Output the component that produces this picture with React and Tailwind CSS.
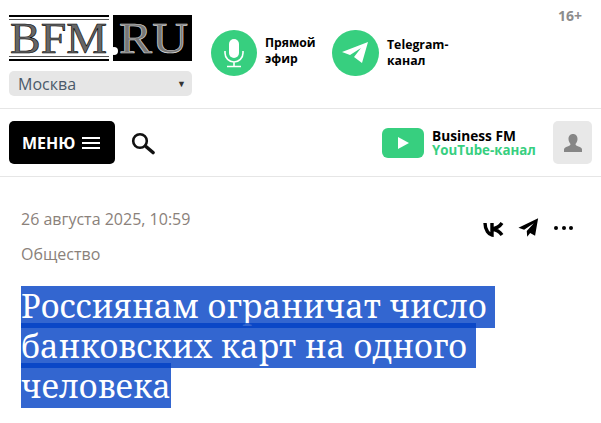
import React from "react";

const Plane = ({ className }) => (
  <svg viewBox="0 0 24 24" className={className} fill="currentColor">
    <path d="M23 1.500 0.500 12.200l6.500 2.400L18 7l-8 9 .5 6.500 3.400-4.300 5.600 3.300z" />
  </svg>
);

function Logo() {
  return (
    <svg width="183" height="46" viewBox="0 0 183 46" className="block overflow-visible">
      <rect x="0" y="0" width="100" height="2" fill="#000" />
      <rect x="0" y="4" width="100" height="1" fill="#555" />
      <rect x="0" y="41" width="100" height="1" fill="#555" />
      <rect x="0" y="44" width="100" height="2" fill="#000" />
      <rect x="104" y="0" width="79" height="46" fill="#000" />
      <text x="1" y="38" fontFamily="'Liberation Serif',serif" fontSize="45" textLength="97" lengthAdjust="spacingAndGlyphs" fill="#666" stroke="#000" strokeWidth="0.6">BFM</text>
      <circle cx="105" cy="36" r="4" fill="#fff" />
      <text x="110" y="38" fontFamily="'Liberation Serif',serif" fontSize="45" textLength="69" lengthAdjust="spacingAndGlyphs" fill="#777" stroke="#ddd" strokeWidth="0.6">RU</text>
    </svg>
  );
}

export default function App() {
  return (
    <div className="w-[601px] h-[423px] overflow-hidden bg-white font-['Open_Sans',sans-serif] text-black">
      <header className="h-[109px] border-b border-[#e6e6e6] flex pl-[9px] pr-[9px]">
        <div className="w-[183px] pt-[15px] shrink-0">
          <Logo />
          <div className="mt-[10px] h-[25px] rounded-[5px] bg-[#e6e6e6] flex items-center justify-between pl-[9px] pr-[6px]">
            <span className="text-[16px] text-[#4a5a6a]">Москва</span>
            <span className="text-[9px] text-[#333]">▼</span>
          </div>
        </div>
        <div className="ml-[19px] pt-[30px] flex items-start">
          <div className="w-[46px] h-[46px] rounded-full bg-[#37cf7f] flex items-center justify-center text-white shrink-0">
            <svg width="24" height="30" viewBox="0 0 24 30" fill="none" stroke="currentColor">
              <rect x="7" y="1" width="10" height="19" rx="5" fill="currentColor" stroke="none" />
              <path d="M3 13v2a9 9 0 0 0 18 0v-2M12 24v4M5 28.500h14" strokeWidth="1.600" />
            </svg>
          </div>
          <div className="ml-[8px] w-[67px] pt-[5px] text-[12.200px] leading-[16px] font-bold">Прямой<br />эфир</div>
          <div className="w-[47px] h-[46px] rounded-full bg-[#37cf7f] flex items-center justify-center text-white shrink-0">
            <svg width="28" height="24" viewBox="0 0 28 24" fill="currentColor" className="mr-[2px]">
              <path d="M27 1 1 11l8 3 11-7-7 9 8 6z" />
            </svg>
          </div>
          <div className="ml-[8px] pt-[7px] text-[12.300px] leading-[16px] font-bold">Telegram-<br />канал</div>
        </div>
        <div className="ml-auto pt-[5px] pr-[10px] text-[14px] font-bold text-[#8c8c8c]">16+</div>
      </header>

      <nav className="h-[68px] border-b border-[#e6e6e6] flex items-center pl-[9px] pr-[9px]">
        <div className="w-[106px] h-[43px] rounded-[5px] bg-black text-white flex items-center pl-[13px] gap-[7px]">
          <span className="text-[16px] font-bold">МЕНЮ</span>
          <span className="flex flex-col gap-[3px] w-[18px]">
            <span className="h-[2px] bg-white" />
            <span className="h-[2px] bg-white" />
            <span className="h-[2px] bg-white" />
          </span>
        </div>
        <svg width="24" height="24" viewBox="0 0 24 24" className="ml-[16px] mt-[2px]" fill="none" stroke="#111">
          <circle cx="9" cy="9" r="6.800" strokeWidth="2.600" />
          <path d="M15.500 15l6.500 5.500" strokeWidth="3.600" strokeLinecap="round" />
        </svg>
        <div className="ml-auto flex items-center">
          <div className="w-[42px] h-[30px] rounded-[6px] bg-[#37cf7f] flex items-center justify-center">
            <svg width="13" height="14" viewBox="0 0 13 14" fill="#fff"><path d="M1 1l11 6-11 6z" /></svg>
          </div>
          <div className="ml-[8px] w-[121px] text-[13.700px] leading-[14px] font-bold">
            Business FM
            <div className="text-[13.300px] text-[#37cf7f]">YouTube-канал</div>
          </div>
          <div className="w-[39px] h-[43px] rounded-[5px] bg-[#e8e8e8] flex items-center justify-center">
            <svg width="20" height="20" viewBox="0 0 20 20" fill="#868686">
              <path d="M10 1c3 0 4.500 2.300 4.500 5 0 2-1 3.800-2 5 .2 1.500 1 1.800 3 2.500 2 .7 3.500 1.500 3.500 3V19H1v-2.500c0-1.500 1.500-2.300 3.500-3 2-.7 2.800-1 3-2.500-1-1.200-2-3-2-5 0-2.700 1.500-5 4.500-5z" />
            </svg>
          </div>
        </div>
      </nav>

      <main className="pl-[21px] pr-[28px]">
        <div className="flex">
          <div>
            <div className="mt-[31px] text-[16px] leading-[22px] text-[#8a817a]">26 августа 2025, 10:59</div>
            <div className="mt-[14px] text-[16px] leading-[20px] text-[#8a817a]">Общество</div>
          </div>
          <div className="ml-auto mt-[40px] flex items-start gap-[14px] text-black">
            <svg width="21" height="24" viewBox="0 0 21 24" fill="none" stroke="currentColor" strokeWidth="3.400">
              <path d="M2 6c0 7 4 11.500 7 12V6M19 6c-2 3-5 5.300-10 6 5 .7 8 3 10 6" />
            </svg>
            <Plane className="w-[21px] h-[21px]" />
            <div className="flex gap-[3.500px] pt-[9px] ml-[1px]">
              <span className="w-[4px] h-[4px] rounded-full bg-black" />
              <span className="w-[4px] h-[4px] rounded-full bg-black" />
              <span className="w-[4px] h-[4px] rounded-full bg-black" />
            </div>
          </div>
        </div>
        <h1 className="mt-[22px] pb-[3px] overflow-hidden text-[32.500px] leading-[40px] font-normal font-['Noto_Serif','DejaVu_Serif',serif]">
          <span className="bg-[rgba(0,64,196,0.8)] text-white">Россиянам ограничат число&nbsp;<br />банковских карт на одного&nbsp;<br />человека</span>
        </h1>
      </main>
    </div>
  );
}
